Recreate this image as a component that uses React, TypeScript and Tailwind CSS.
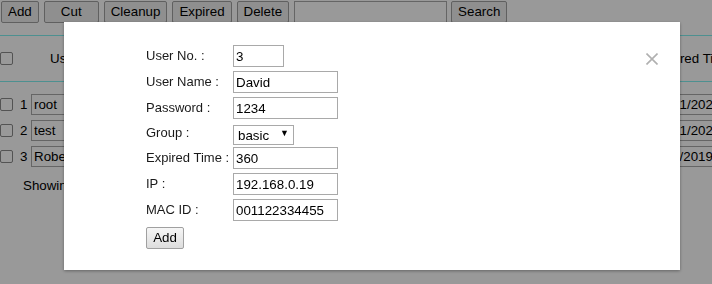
const font = "font-['Liberation_Sans',Arial,sans-serif]";

const toolBtn =
  "h-[22px] rounded-[2px] border border-[#a0a0a0] bg-[#efefef] px-[6px] text-[13.33px] leading-none text-black";

const users = [
  { no: 1, name: "root", expired: "12/1/2021" },
  { no: 2, name: "test", expired: "12/1/2021" },
  { no: 3, name: "Robert", expired: "9/1/2019" },
];

function Checkbox() {
  return (
    <span className="block h-[13px] w-[13px] rounded-[2px] border border-[#8a8a8a] bg-white" />
  );
}

function Field({
  label,
  value,
  width = "w-[105px]",
}: {
  label: string;
  value: string;
  width?: string;
}) {
  return (
    <>
      <label className="text-[13px] text-[#1a1a1a]">{label}</label>
      <input
        type="text"
        defaultValue={value}
        className={`${width} h-[22px] border border-[#a9a9a9] px-[2px] text-[13.33px] text-black outline-none`}
      />
    </>
  );
}

export default function App() {
  return (
    <div className={`${font} relative h-screen w-full overflow-hidden bg-white text-black`}>
      {/* page behind the dialog */}
      <div className="w-[760px]">
        <div className="flex items-center gap-[5px] pl-[1px] pt-[1px]">
          <button className={toolBtn}>Add</button>
          <button className={`${toolBtn} w-[55px]`}>Cut</button>
          <button className={toolBtn}>Cleanup</button>
          <button className={toolBtn}>Expired</button>
          <button className={toolBtn}>Delete</button>
          <input
            type="text"
            className="h-[22px] w-[153px] border border-[#a9a9a9] bg-white"
          />
          <button className={`${toolBtn} ml-[-1px]`}>Search</button>
        </div>

        <div className="mt-[12px] grid h-[47px] grid-cols-[31px_627px_1fr] items-center border-y border-[#80f0f0] text-[13.33px]">
          <span>
            <Checkbox />
          </span>
          <span className="pl-[19px]">User Name</span>
          <span className="ml-[-4px]">Expired Time</span>
        </div>

        <div className="mt-[12px] flex flex-col gap-[5px]">
          {users.map((u) => (
            <div
              key={u.no}
              className="grid h-[21px] grid-cols-[31px_627px_1fr] items-center text-[13.33px]"
            >
              <span className="flex items-center gap-[7px]">
                <Checkbox />
                <span>{u.no}</span>
              </span>
              <span>
                <input
                  type="text"
                  defaultValue={u.name}
                  className="h-[21px] w-[120px] border border-[#a9a9a9] px-[2px]"
                />
              </span>
              <span>
                <input
                  type="text"
                  defaultValue={u.expired}
                  className="h-[21px] w-[100px] border border-[#a9a9a9] px-[2px]"
                />
              </span>
            </div>
          ))}
        </div>

        <div className="mt-[9px] pl-[23px] text-[13.33px]">
          Showing 1 to 3 of 3 entries
        </div>
      </div>

      {/* dialog */}
      <div className="fixed inset-0 bg-black/40">
        <div className="ml-[64px] mt-[22px] flex h-[248px] w-[616px] items-start justify-between bg-white pb-[23px] pl-[82px] pr-[22px] pt-[23px] shadow-[0_1px_3px_rgba(0,0,0,0.35)]">
          <form className="grid grid-cols-[87px_auto] items-center gap-y-[4px]">
            <Field label="User No. :" value="3" width="w-[51px]" />
            <Field label="User Name :" value="David" />
            <Field label="Password :" value="1234" />
            <label className="text-[13px] text-[#1a1a1a]">Group :</label>
            <div className="relative h-[20px] w-[61px]">
              <select
                defaultValue="basic"
                className="h-[20px] w-[61px] appearance-none border border-[#a9a9a9] bg-white pl-[4px] text-[13.33px] text-black outline-none"
              >
                <option value="basic">basic</option>
                <option value="admin">admin</option>
              </select>
              <span className="pointer-events-none absolute right-[5px] top-[6px] text-[9px] leading-none text-black">
                ▼
              </span>
            </div>
            <Field label="Expired Time :" value="360" />
            <Field label="IP :" value="192.168.0.19" />
            <Field label="MAC ID :" value="001122334455" />
            <div className="col-span-2">
              <button
                type="button"
                className="h-[22px] w-[38px] rounded-[2px] border border-[#a0a0a0] bg-gradient-to-b from-[#f6f6f6] to-[#dddddd] text-[13.33px] text-black"
              >
                Add
              </button>
            </div>
          </form>

          <button type="button" className="mt-[8px] text-[#b0b0b0]">
            <svg width="12" height="12" viewBox="0 0 12 12">
              <path
                d="M0.5 0.5 L11.5 11.5 M11.5 0.5 L0.5 11.5"
                stroke="currentColor"
                strokeWidth="1.6"
              />
            </svg>
          </button>
        </div>
      </div>
    </div>
  );
}
